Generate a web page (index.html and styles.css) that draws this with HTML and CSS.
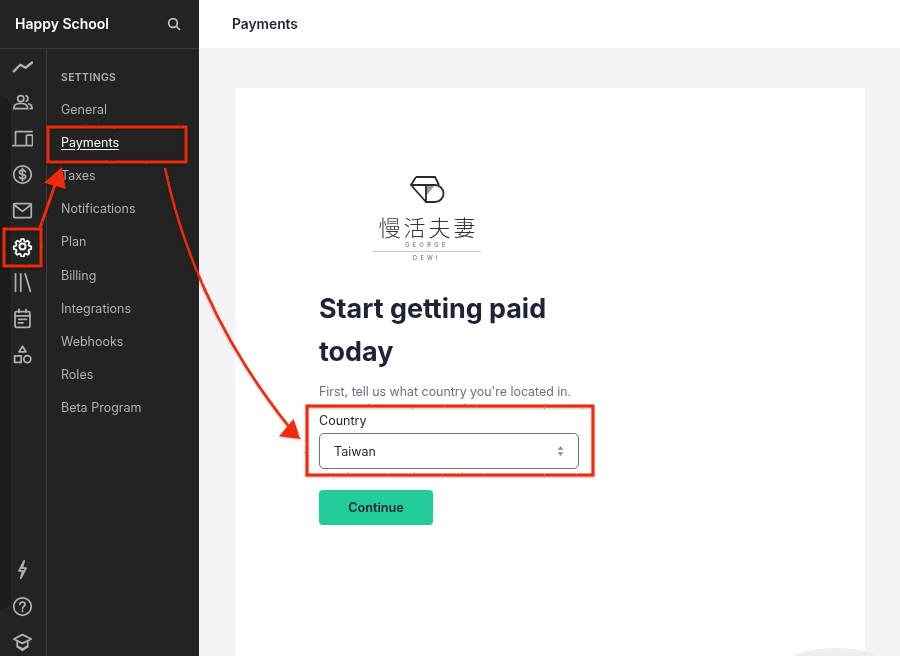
FILE: index.html
```html
<!DOCTYPE html>
<html lang="en">
<head>
  <meta charset="UTF-8">
  <title>Payments</title>
  <link rel="stylesheet" href="styles.css">
</head>
<body>
  <div class="app">
    <aside class="sidebar">
      <div class="brand">
        <span class="brand-name">Happy School</span>
        <svg class="search-icon" viewBox="0 0 24 24"><circle cx="10.5" cy="10.5" r="6.5"/><path d="M15.5 15.5L21 21"/></svg>
      </div>
      <div class="side-body">
        <div class="rail-shade"></div>
        <nav class="rail">
          <div class="rail-group">
            <div class="rail-item trend"><svg viewBox="0 0 24 24"><path d="M2 17.500L9.500 10l6 3.500L23 7.500"/></svg></div>
            <div class="rail-item"><svg viewBox="0 0 24 24"><circle cx="10" cy="7.500" r="3.500"/><path d="M2 19c0-4 3.500-6 8-6s8 2 8 6z"/><path d="M16 4.200a3.500 3.500 0 0 1 0 6.600M19 13.500c2.500.8 4 2.800 4 5.500h-2"/></svg></div>
            <div class="rail-item"><svg viewBox="0 0 24 24"><path d="M23 4H4v14M1 20h14"/><rect x="16.500" y="8" width="7" height="12" rx="1"/></svg></div>
            <div class="rail-item"><svg viewBox="0 0 24 24"><circle cx="12" cy="12" r="10"/><path d="M15.500 9c-.500-1.300-1.800-2-3.500-2-2 0-3.500 1-3.500 2.500S10 12 12 12s3.500 1 3.500 2.500S14 17 12 17c-1.700 0-3-.700-3.500-2M12 5v14"/></svg></div>
            <div class="rail-item"><svg viewBox="0 0 24 24"><rect x="2" y="4" width="20" height="16" rx="1"/><path d="M3 6l9 7 9-7"/></svg></div>
            <div class="rail-item active"><svg viewBox="0 0 24 24"><path d="M10.300 2.500h3.400l.6 2.800 1.900.8 2.400-1.500 2.400 2.400-1.500 2.400.8 1.900 2.800.6v3.400l-2.800.6-.8 1.900 1.500 2.400-2.400 2.400-2.400-1.500-1.900.8-.6 2.800h-3.400l-.6-2.800-1.900-.8-2.400 1.500-2.400-2.400 1.500-2.400-.8-1.900-2.800-.6v-3.400l2.800-.6.8-1.900-1.500-2.400 2.400-2.400 2.400 1.500 1.900-.8z" transform="translate(1.200 1.200) scale(.9)"/><circle cx="12" cy="12" r="3.500"/></svg></div>
            <div class="rail-item"><svg viewBox="0 0 24 24"><path d="M4 2v20M10 2v20M15 2l6 20"/></svg></div>
            <div class="rail-item"><svg viewBox="0 0 24 24"><rect x="3.500" y="4" width="17" height="18" rx="1.500"/><path d="M3.500 9h17M8 1.500V5M16 1.500V5M7.500 13h9M7.500 17h5"/></svg></div>
            <div class="rail-item"><svg viewBox="0 0 24 24"><path d="M12 2.500l4 6.500H8z"/><rect x="3" y="13.500" width="7.500" height="7.500"/><circle cx="17.500" cy="17.200" r="4"/></svg></div>
          </div>
          <div class="rail-group">
            <div class="rail-item"><svg viewBox="0 0 24 24"><path d="M14 2L8 13.500h4.500L10 22l6-11.500h-4.500z"/></svg></div>
            <div class="rail-item"><svg viewBox="0 0 24 24"><circle cx="12" cy="12" r="10"/><path d="M9 9.500C9 7.800 10.300 7 12 7s3 1 3 2.500c0 2.300-3 2.300-3 4.500M12 16.500v1"/></svg></div>
            <div class="rail-item"><svg viewBox="0 0 24 24"><path d="M12 3l10 5-10 5L2 8z"/><path d="M6 11v6l6 4 6-4v-6M6 16l6 3.500 6-3.500"/></svg></div>
          </div>
        </nav>
        <nav class="menu">
          <div class="menu-title">SETTINGS</div>
          <a class="menu-link">General</a>
          <a class="menu-link current">Payments</a>
          <a class="menu-link">Taxes</a>
          <a class="menu-link">Notifications</a>
          <a class="menu-link">Plan</a>
          <a class="menu-link">Billing</a>
          <a class="menu-link">Integrations</a>
          <a class="menu-link">Webhooks</a>
          <a class="menu-link">Roles</a>
          <a class="menu-link">Beta Program</a>
        </nav>
      </div>
    </aside>

    <main class="main">
      <header class="topbar">Payments</header>
      <div class="content">
        <section class="card">
          <div class="logo">
            <svg class="logo-mark" viewBox="0 0 36 30">
              <path class="logo-fill" d="M17 10h9l-9 11z"/>
              <path d="M7 2h19l4 8M7 2L2 10l15 17"/>
              <path d="M2 10h24a8.500 8.500 0 0 1 0 17h-9V10"/>
            </svg>
            <div class="logo-cn">慢活夫妻</div>
            <div class="logo-en">GEORGE</div>
            <div class="logo-rule"></div>
            <div class="logo-en">DEWI</div>
          </div>
          <h1 class="title">Start getting paid today</h1>
          <p class="lead">First, tell us what country you're located in.</p>
          <label class="field-label">Country</label>
          <div class="select">
            <span>Taiwan</span>
            <svg class="select-arrows" viewBox="0 0 8 12"><path d="M4 0l3.500 4.500h-7zM4 12L.5 7.500h7z"/></svg>
          </div>
          <button class="continue">Continue</button>
        </section>
      </div>
      <div class="corner-shadow"></div>
    </main>

    <svg class="marks" viewBox="0 0 900 656">
      <defs>
        <filter id="rough" x="0" y="0" width="900" height="656" filterUnits="userSpaceOnUse">
          <feTurbulence type="fractalNoise" baseFrequency="0.5" numOctaves="1" seed="4"/>
          <feDisplacementMap in="SourceGraphic" scale="2"/>
        </filter>
      </defs>
      <g filter="url(#rough)">
        <rect x="48" y="127" width="138" height="35"/>
        <rect x="4" y="229" width="37" height="37"/>
        <rect x="307" y="406" width="286" height="69"/>
        <path d="M40 228L56 182"/>
        <path class="thin" d="M165 168C180 240 215 335 290 428"/>
        <path class="head" d="M61 170L47 182L64 187z"/>
        <path class="head" d="M298 437L282 435L293 422z"/>
      </g>
    </svg>
  </div>
</body>
</html>
```

FILE: styles.css
```css
* {
  box-sizing: border-box;
}

body {
  margin: 0;
  font-family: Inter, "Noto Sans", sans-serif;
  color: #1f2337;
  background: #f4f4f6;
  overflow: hidden;
}

.app {
  display: flex;
  position: relative;
  width: 900px;
  height: 656px;
  overflow: hidden;
  will-change: transform;
}

.sidebar {
  width: 199px;
  flex-shrink: 0;
  display: flex;
  flex-direction: column;
  background: #232323;
}

.brand {
  height: 49px;
  display: flex;
  align-items: center;
  justify-content: space-between;
  padding: 0 17px 1px 15px;
  border-bottom: 1px solid #3a3a3a;
}

.brand-name {
  color: #fff;
  font-size: 14px;
  font-weight: 600;
}

.search-icon {
  width: 16px;
  height: 16px;
  fill: none;
  stroke: #c4c4c4;
  stroke-width: 2.500;
}

.side-body {
  flex: 1;
  display: flex;
  position: relative;
}

.rail-shade {
  position: absolute;
  left: 0;
  top: 46px;
  bottom: 44px;
  width: 12px;
  background: #1c1c1c;
  border: 1px solid #2a2a2a;
  border-left: none;
  border-radius: 0 12px 12px 0;
}

.rail {
  width: 47px;
  flex-shrink: 0;
  display: flex;
  flex-direction: column;
  justify-content: space-between;
  padding-right: 2px;
  border-right: 1px solid #3a3a3a;
  position: relative;
}

.rail-group:last-child {
  margin-bottom: -5px;
}

.rail-item {
  height: 35.900px;
  display: flex;
  align-items: center;
  justify-content: center;
}

.rail-group:last-child .rail-item {
  height: 36.500px;
}

.rail-item svg {
  width: 21px;
  height: 21px;
  fill: none;
  stroke: #b0b0b0;
  stroke-width: 2;
  stroke-linejoin: round;
  stroke-linecap: round;
}

.rail-item.trend svg {
  stroke-width: 2.800;
}

.rail-item.active svg {
  stroke: #fff;
  stroke-width: 2.200;
}

.menu {
  flex: 1;
  display: flex;
  flex-direction: column;
  padding: 22px 0 0 14px;
}

.menu-title {
  color: #b0b0b0;
  font-size: 10.400px;
  font-weight: 600;
  letter-spacing: .4px;
  line-height: 14px;
  margin-bottom: 7.500px;
}

.menu-link {
  height: 33.200px;
  display: flex;
  align-items: center;
  color: #b0b0b0;
  font-size: 12.500px;
}

.menu-link.current {
  color: #fff;
  text-decoration: underline;
  text-underline-offset: 2px;
}

.main {
  flex: 1;
  display: flex;
  flex-direction: column;
  position: relative;
}

.topbar {
  height: 48px;
  flex-shrink: 0;
  display: flex;
  align-items: center;
  padding-left: 33px;
  background: #fff;
  font-size: 13.800px;
  font-weight: 600;
}

.content {
  flex: 1;
  padding: 40px 35px 0 36px;
}

.card {
  height: 100%;
  background: #fff;
  padding: 87px 286px 0 84px;
}

.logo {
  width: 108px;
  margin-left: 54px;
  display: flex;
  flex-direction: column;
  align-items: center;
}

.logo-mark {
  width: 36px;
  height: 30px;
  flex-shrink: 0;
  fill: none;
  stroke: #2a2a2a;
  stroke-width: 1.800;
}

.logo-fill {
  fill: #9a9a9a;
  stroke: none;
}

.logo-cn {
  margin-top: 7px;
  font-family: "Noto Sans CJK TC", sans-serif;
  font-weight: 300;
  font-size: 22px;
  line-height: 28px;
  letter-spacing: 3px;
  margin-right: -3px;
  white-space: nowrap;
  color: #333;
}

.logo-en {
  font-size: 5.500px;
  letter-spacing: 3.500px;
  line-height: 9px;
  color: #555;
}

.logo-cn + .logo-en {
  margin-top: 1px;
}

.logo-rule {
  width: 108px;
  height: 1px;
  background: #c8c8c8;
  margin: 1px 0 2px;
}

.title {
  margin: 24px 0 0;
  font-size: 26.900px;
  font-weight: 700;
  line-height: 43px;
}

.lead {
  margin: 10px 0 0;
  color: #6b6f80;
  font-size: 12.400px;
  line-height: 18px;
  white-space: nowrap;
}

.field-label {
  display: block;
  margin-top: 11px;
  font-size: 12.500px;
  line-height: 18px;
}

.select {
  height: 36px;
  margin-top: 3px;
  display: flex;
  align-items: center;
  justify-content: space-between;
  padding: 0 14px;
  border: 1px solid #6e7287;
  border-radius: 5px;
  font-size: 12.500px;
}

.select-arrows {
  width: 7px;
  height: 10px;
  fill: #8a8d99;
}

.continue {
  display: block;
  width: 114px;
  height: 35px;
  margin-top: 21px;
  border: none;
  border-radius: 4px;
  background: #22cc9b;
  color: #1f2337;
  font-family: inherit;
  font-size: 12.700px;
  font-weight: 600;
}

.corner-shadow {
  position: absolute;
  right: 14px;
  bottom: -24px;
  width: 100px;
  height: 32px;
  border-radius: 50%;
  background: #efeff0;
}

.marks {
  position: absolute;
  left: 0;
  top: 0;
  width: 900px;
  height: 656px;
  fill: none;
  stroke: #f12a08;
  stroke-width: 3;
  pointer-events: none;
  filter: drop-shadow(0 1px 1px rgba(0, 0, 0, .3));
}

.marks .thin {
  stroke-width: 2.500;
}

.marks .head {
  fill: #f12a08;
}
```
